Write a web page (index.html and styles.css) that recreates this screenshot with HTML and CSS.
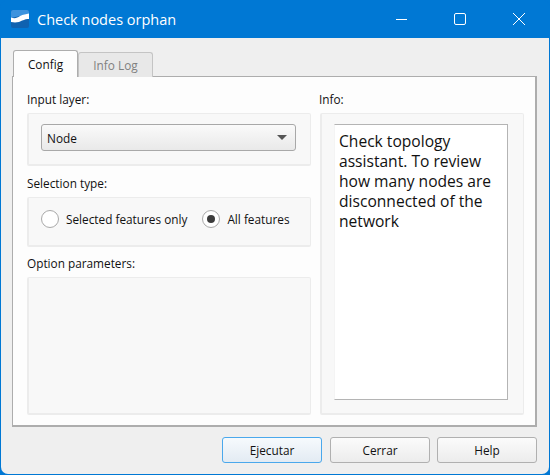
FILE: index.html
```html
<!DOCTYPE html>
<html lang="en">
<head>
    <meta charset="UTF-8">
    <meta name="viewport" content="width=device-width, initial-scale=1.0">
    <title>Check nodes orphan</title>
    <link rel="stylesheet" href="styles.css">
</head>
<body>
    <div class="window">
        <header class="titlebar">
            <svg class="app-icon" width="18" height="18" viewBox="0 0 18 18">
                <rect width="18" height="18" rx="2" fill="#0f62b0"/>
                <path d="M0 8V2a2 2 0 0 1 2-2H16a2 2 0 0 1 2 2V4Z" fill="#3d93de"/>
                <path d="M0 7.500C4 9 6 8 9 6C12 4.500 15 4 18 3.500V9C13 9 11 11 8 12C5 12.500 3 12.500 0 12Z" fill="#fff"/>
            </svg>
            <span class="title">Check nodes orphan</span>
            <div class="controls">
                <svg width="12" height="12" viewBox="0 0 12 12"><path d="M1 6.500H12.500" stroke="#fff"/></svg>
                <svg width="12" height="12" viewBox="0 0 12 12"><rect x="0.5" y="0.5" width="11" height="11" rx="1.500" fill="none" stroke="#fff"/></svg>
                <svg width="12" height="12" viewBox="0 0 12 12"><path d="M0 0L12 12M12 0L0 12" stroke="#fff"/></svg>
            </div>
        </header>

        <main class="content">
            <div class="tabs">
                <div class="tab active">Config</div>
                <div class="tab">Info Log</div>
            </div>
            <div class="pane">
                <div class="left">
                    <label class="caption">Input layer:</label>
                    <div class="group group-input">
                        <div class="combo">
                            <span>Node</span>
                            <span class="arrow"></span>
                        </div>
                    </div>
                    <label class="caption">Selection type:</label>
                    <div class="group group-radio">
                        <div class="radio-item">
                            <span class="radio"></span>
                            <span>Selected features only</span>
                        </div>
                        <div class="radio-item">
                            <span class="radio checked"></span>
                            <span>All features</span>
                        </div>
                    </div>
                    <label class="caption">Option parameters:</label>
                    <div class="group group-options"></div>
                </div>
                <div class="right">
                    <label class="caption">Info:</label>
                    <div class="group group-info">
                        <div class="info-text">Check topology assistant. To review how many nodes are disconnected of the network</div>
                    </div>
                </div>
            </div>
            <div class="buttons">
                <button class="btn default">Ejecutar</button>
                <button class="btn">Cerrar</button>
                <button class="btn">Help</button>
            </div>
        </main>
    </div>
</body>
</html>
```

FILE: styles.css
```css
* {
    box-sizing: border-box;
}

html, body {
    margin: 0;
    height: 100%;
    background-color: #0078d4;
}

body {
    font-family: "Open Sans", "Noto Sans", sans-serif;
    font-size: 11.8px;
    color: #111;
}

.window {
    width: 550px;
    height: 475px;
    display: flex;
    flex-direction: column;
    background-color: #0078d4;
    border-radius: 8px;
    overflow: hidden;
}

.titlebar {
    height: 38px;
    flex: none;
    display: flex;
    align-items: center;
    padding-left: 11px;
    color: #fff;
}

.app-icon {
    margin-right: 8px;
    margin-top: -1px;
}

.title {
    font-size: 14.5px;
}

.controls {
    margin-left: auto;
    display: flex;
    gap: 47px;
    padding-right: 25px;
    margin-top: -1px;
}

.content {
    flex: 1;
    margin: 0 1px 1px;
    padding: 12px 12px 0 11px;
    background-color: #efefef;
    border-radius: 0 0 7px 7px;
}

.tabs {
    display: flex;
    align-items: flex-end;
    height: 27px;
    padding-left: 1px;
    margin-bottom: -1px;
}

.tab {
    height: 25px;
    width: 75px;
    padding-top: 4px;
    text-align: center;
    color: #808080;
    background-color: #e8e8e8;
    border: 1px solid #c4c4c4;
    border-bottom: none;
    border-radius: 3px 3px 0 0;
}

.tab.active {
    position: relative;
    z-index: 1;
    height: 27px;
    width: 65px;
    padding-top: 5px;
    color: #111;
    background-color: #fdfdfd;
    border-color: #adadad;
}

.pane {
    height: 351px;
    display: flex;
    gap: 9px;
    padding: 0 11px 0 14px;
    background-color: #fdfdfd;
    border: 1px solid #adadad;
    border-width: 1px 2px 2px 1px;
}

.left {
    width: 284px;
}

.right {
    width: 204px;
}

.caption {
    display: block;
    height: 16px;
    line-height: 16px;
}

.left .caption, .right .caption {
    margin-top: 14px;
    margin-bottom: 6px;
}

.left .caption:nth-of-type(2) {
    margin-top: 9px;
}

.left .caption:nth-of-type(3) {
    margin-top: 8px;
}

.right .caption {
    margin-left: -1px;
}

.group {
    background-color: #f8f8f8;
    border: 2px solid #ececec;
    border-width: 1px 1px 2px 2px;
    border-radius: 2px;
}

.group-input {
    height: 53px;
    padding: 10px 14px 0 12px;
}

.combo {
    height: 27px;
    display: flex;
    align-items: center;
    justify-content: space-between;
    padding: 0 8px 0 5px;
    border: 1px solid #a8a8a8;
    border-radius: 3px;
    background: linear-gradient(#fafafa, #e9e9e9);
}

.arrow {
    width: 0;
    height: 0;
    border-left: 5px solid transparent;
    border-right: 5px solid transparent;
    border-top: 5px solid #555;
}

.group-radio {
    height: 50px;
    display: flex;
    align-items: center;
    gap: 15px;
    padding: 0 0 5px 12px;
}

.radio-item {
    display: flex;
    align-items: center;
    gap: 7px;
}

.radio {
    width: 18px;
    height: 18px;
    border-radius: 50%;
    border: 1.5px solid #a9a9a9;
    background-color: #fff;
    display: flex;
    align-items: center;
    justify-content: center;
}

.radio.checked::after {
    content: "";
    width: 8px;
    height: 8px;
    border-radius: 50%;
    background-color: #3c3c3c;
}

.group-options {
    height: 138px;
}

.group-info {
    height: 302px;
    padding: 10px 15px 0 12px;
}

.info-text {
    height: 276px;
    padding: 6px 8px 0 4px;
    font-size: 15.6px;
    line-height: 20px;
    background-color: #fff;
    border: 1px solid #b4b4b4;
    border-left-color: #f4f4f4;
}

.buttons {
    display: flex;
    justify-content: flex-end;
    gap: 7px;
    margin-top: 10px;
}

.btn {
    width: 100px;
    height: 26px;
    padding: 0;
    font: inherit;
    color: #111;
    border: 1px solid #b0b0b0;
    border-radius: 3px;
    background: linear-gradient(#fbfbfb, #ececec);
}

.btn.default {
    margin-right: 1px;
    border-color: #4aa8ec;
    background: linear-gradient(#f6fafd, #e3ebf3);
}
```
